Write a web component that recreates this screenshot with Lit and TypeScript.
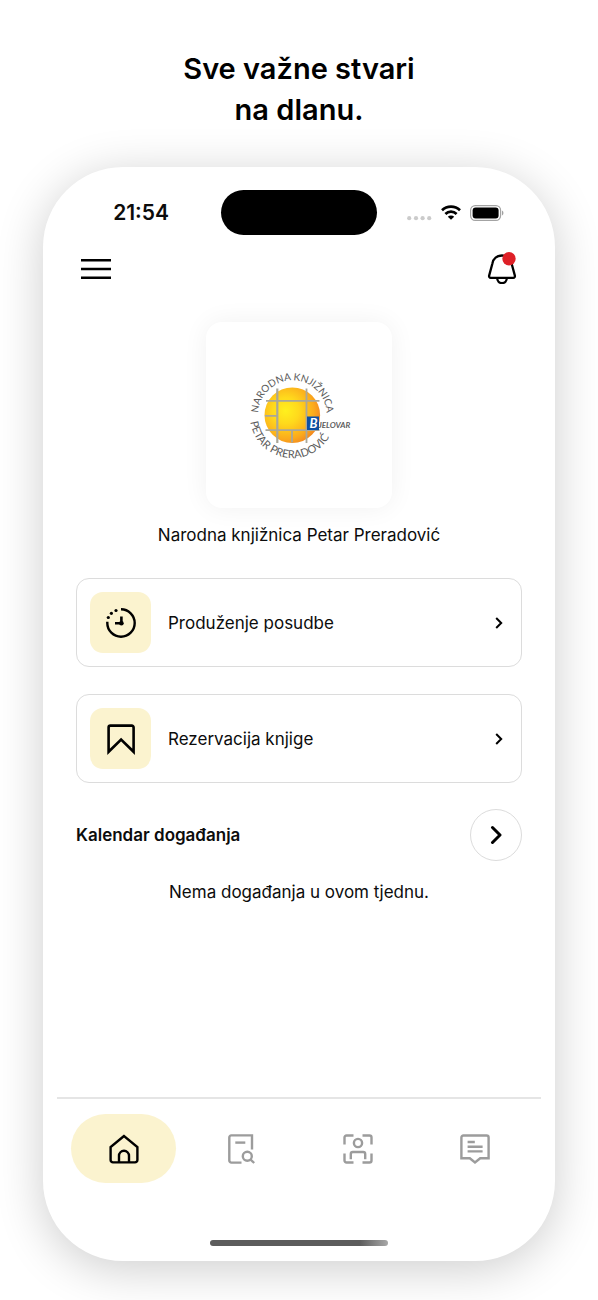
import { LitElement, html, css, svg } from "lit";
import { customElement, property, state } from "lit/decorators.js";
import { classMap } from "lit/directives/class-map.js";

const icons = {
  clock: svg`
    <path d="M16 2.3A13.7 13.7 0 1 1 2.3 16V14.8"></path>
    <path d="M16.4 9.4V16.2H10" stroke-width="2.6"></path>
    <g fill="currentColor" stroke="none">
      <circle cx="16.4" cy="16.3" r="2.3"></circle>
      <circle cx="11" cy="3.5" r="1.6"></circle>
      <circle cx="6.4" cy="6.3" r="1.6"></circle>
      <circle cx="3.3" cy="10.5" r="1.6"></circle>
    </g>`,
  bookmark: svg`<path d="M3.6 28.8V4.4a1.8 1.8 0 0 1 1.8-1.8h21.4a1.8 1.8 0 0 1 1.8 1.8v24.4L16.1 16.6z" stroke-width="2.6"></path>`,
  home: svg`
    <path d="M16 3L2.6 14v13a2.4 2.4 0 0 0 2.4 2.4h22a2.4 2.4 0 0 0 2.4-2.4V14z"></path>
    <path d="M11 29v-6.2a5 5 0 0 1 10 0V29"></path>`,
  search: svg`
    <path d="M16.5 29.6H6.3a2 2 0 0 1-2-2V4.4a2 2 0 0 1 2-2H27v14"></path>
    <path d="M10.3 9.6h10"></path>
    <circle cx="22.3" cy="23.3" r="4.5"></circle>
    <path d="M25.6 26.6l3.6 3.4"></path>`,
  profile: svg`
    <path d="M2.5 11.5V4.5a2 2 0 0 1 2-2h7M20.5 2.5h7a2 2 0 0 1 2 2v7M29.5 20.5v7a2 2 0 0 1-2 2h-7M11.5 29.5h-7a2 2 0 0 1-2-2v-7"></path>
    <circle cx="16" cy="10" r="4.1"></circle>
    <path d="M8.8 26.3V21a2 2 0 0 1 2-2h10.4a2 2 0 0 1 2 2v5.3"></path>`,
  message: svg`
    <path d="M4.4 2.5h23.2a2 2 0 0 1 2 2V25.2H21.2L16 29.4 10.8 25.2H2.4V4.5a2 2 0 0 1 2-2z"></path>
    <path d="M8.6 9h7.2M8.6 13.8h15M8.6 18.4h15"></path>`,
};

type IconName = keyof typeof icons;

const icon = (name: IconName) => html`
  <svg width="32" height="32" viewBox="0 0 32 32" fill="none" stroke="currentColor" stroke-width="2.4" aria-hidden="true">
    ${icons[name]}
  </svg>`;

@customElement("status-bar")
class StatusBar extends LitElement {
  static styles = css`
    :host {
      display: grid;
      grid-template-columns: 1fr 156px 1fr;
      align-items: center;
    }
    .time {
      text-align: right;
      padding-right: 52px;
      font-size: 21px;
      line-height: 24px;
      font-weight: 600;
    }
    .island {
      height: 45px;
      border-radius: 23px;
      background: #000;
    }
    .signals {
      display: flex;
      align-items: center;
      gap: 9px;
      padding-left: 30px;
    }
    svg {
      display: block;
      flex: none;
    }
  `;

  render() {
    return html`
      <span class="time">21:54</span>
      <span class="island"></span>
      <span class="signals">
        <svg width="25" height="16" viewBox="0 0 25 16" fill="#cbcbcb" aria-hidden="true">
          <circle cx="2.2" cy="13.2" r="2.1"></circle>
          <circle cx="9" cy="13.2" r="2.1"></circle>
          <circle cx="15.6" cy="13.2" r="2.1"></circle>
          <circle cx="22.2" cy="13.2" r="2.1"></circle>
        </svg>
        <svg width="20" height="16" viewBox="0 0 20 16" fill="none" stroke="#000" stroke-width="2.7" aria-hidden="true">
          <path d="M1 5.3a13 13 0 0 1 18 0"></path>
          <path d="M4.4 9a8 8 0 0 1 11.2 0"></path>
          <path d="M10 14.8l-3.2-3a4.6 4.6 0 0 1 6.4 0z" fill="#000" stroke="none"></path>
        </svg>
        <svg width="34" height="16" viewBox="0 0 34 16" aria-hidden="true">
          <rect x=".6" y=".6" width="30" height="14.8" rx="4.6" fill="none" stroke="#a3a3a3" stroke-width="1.2"></rect>
          <rect x="2.6" y="2.6" width="26" height="10.8" rx="3" fill="#000"></rect>
          <path d="M32.2 5.4c1.6 1 1.6 4.2 0 5.2z" fill="#8c8c8c"></path>
        </svg>
      </span>
    `;
  }
}

@customElement("library-logo")
class LibraryLogo extends LitElement {
  static styles = css`
    :host {
      display: block;
      width: 186px;
      height: 186px;
      border-radius: 16px;
      background: #fff;
      box-shadow: 0 0 26px rgba(0, 0, 0, 0.06);
    }
    svg {
      display: block;
    }
    .ring {
      font-family: Lato, sans-serif;
      font-size: 10px;
      fill: #5c5c5c;
    }
    .wide {
      font-size: 11px;
    }
    .town {
      font-family: Lato, "Liberation Sans", sans-serif;
      font-weight: 700;
      font-style: italic;
      font-size: 8px;
      fill: #5c5c5c;
    }
    .initial {
      font-size: 13px;
      fill: #fff;
    }
  `;

  render() {
    return html`
      <svg width="186" height="186" viewBox="0 0 186 186" role="img" aria-label="Narodna knjižnica Petar Preradović Bjelovar">
        <defs>
          <radialGradient id="sun" cx="0.38" cy="0.42" r="0.68">
            <stop offset="0" stop-color="#fff01e"></stop>
            <stop offset="0.35" stop-color="#ffd91c"></stop>
            <stop offset="0.75" stop-color="#fbaa1c"></stop>
            <stop offset="1" stop-color="#f07f22"></stop>
          </radialGradient>
          <path id="upper" d="M52.3 92.5A34.2 34.2 0 0 1 120.7 92.5"></path>
          <path id="lower" d="M43.8 93.5A42.7 42.7 0 0 0 129.2 93.5"></path>
        </defs>
        <circle cx="86.3" cy="93.2" r="27.8" fill="url(#sun)"></circle>
        <g stroke="#a9a79a" stroke-width="1.8" fill="none">
          <path d="M71.3 66.5V121" stroke-width="2.2"></path>
          <path d="M100.5 66.5V121"></path>
          <path d="M60 78.8H113.5M59 93.8H71.3M59.5 108.2H113.5M86 108.2V120.5"></path>
        </g>
        <rect x="101" y="94.5" width="12" height="13.5" fill="#0d4fa3"></rect>
        <text class="town initial" x="103.5" y="106">B</text>
        <text class="town" x="112.5" y="106">JELOVAR</text>
        <text class="ring"><textPath href="#upper" startOffset="50%" text-anchor="middle">NARODNA KNJIŽNICA</textPath></text>
        <text class="ring wide"><textPath href="#lower" startOffset="44%" text-anchor="middle">PETAR PRERADOVIĆ</textPath></text>
      </svg>
    `;
  }
}

@customElement("action-card")
class ActionCard extends LitElement {
  @property() icon: IconName = "clock";
  @property() label = "";

  static styles = css`
    :host {
      display: block;
    }
    .card {
      display: flex;
      align-items: center;
      gap: 17px;
      box-sizing: border-box;
      width: 100%;
      padding: 13px 18px 13px 13px;
      border: 1px solid #dcdcdc;
      border-radius: 13px;
      background: #fff;
      color: #0c0c0c;
      font: inherit;
      text-align: left;
      cursor: pointer;
    }
    .tile {
      display: grid;
      place-items: center;
      width: 61px;
      height: 61px;
      border-radius: 13px;
      background: #fbf3cf;
      color: #000;
    }
    .label {
      flex: 1;
    }
    svg {
      display: block;
    }
  `;

  render() {
    return html`
      <button class="card" type="button">
        <span class="tile">${icon(this.icon)}</span>
        <span class="label">${this.label}</span>
        <svg width="8" height="12" viewBox="0 0 8 12" fill="none" stroke="#000" stroke-width="2" aria-hidden="true">
          <path d="M1.2 1l5 5-5 5"></path>
        </svg>
      </button>
    `;
  }
}

@customElement("tab-bar")
class TabBar extends LitElement {
  @state() private active: IconName = "home";

  private tabs: { icon: IconName; label: string }[] = [
    { icon: "home", label: "Početna" },
    { icon: "search", label: "Pretraga" },
    { icon: "profile", label: "Profil" },
    { icon: "message", label: "Poruke" },
  ];

  static styles = css`
    :host {
      display: block;
      margin: 0 14px;
      border-top: 2px solid #e5e5e5;
    }
    .tabs {
      display: grid;
      grid-template-columns: repeat(4, 1fr);
      justify-items: center;
      padding: 15px 7px 0 8px;
    }
    .tab {
      display: grid;
      place-items: center;
      width: 105px;
      height: 69px;
      border-radius: 35px;
      color: #9c9c9c;
    }
    .tab.active {
      background: #fbf3cf;
      color: #000;
    }
    svg {
      display: block;
    }
  `;

  private select(event: Event, name: IconName) {
    event.preventDefault();
    this.active = name;
  }

  render() {
    return html`
      <nav class="tabs">
        ${this.tabs.map(
          (tab) => html`
            <a
              class=${classMap({ tab: true, active: tab.icon === this.active })}
              href="#${tab.icon}"
              aria-label=${tab.label}
              @click=${(event: Event) => this.select(event, tab.icon)}
              >${icon(tab.icon)}</a
            >
          `
        )}
      </nav>
    `;
  }
}

@customElement("app-root")
class AppRoot extends LitElement {
  static styles = css`
    :host {
      display: flex;
      flex-direction: column;
      box-sizing: border-box;
      min-height: 100vh;
      padding: 48px 43px 39px;
      overflow: hidden;
      background: #fff;
      color: #0c0c0c;
      font-family: Inter, "Liberation Sans", sans-serif;
      font-size: 17px;
      line-height: 24px;
    }
    .headline {
      margin: 0 0 37px;
      font-size: 29px;
      line-height: 41px;
      font-weight: 600;
      text-align: center;
      color: #000;
    }
    .phone {
      flex: 1;
      display: flex;
      flex-direction: column;
      padding: 23px 0 15px;
      border-radius: 80px;
      background: #fff;
      box-shadow: 0 8px 48px rgba(0, 0, 0, 0.2);
    }
    .toolbar {
      display: flex;
      justify-content: space-between;
      align-items: center;
      margin: 17px 38px 0;
    }
    .plain {
      display: block;
      padding: 0;
      border: 0;
      background: none;
      cursor: pointer;
    }
    .content {
      display: flex;
      flex-direction: column;
      padding: 38px 33px 24px;
    }
    .logo {
      align-self: center;
    }
    .name {
      margin: 15px 0 31px;
      text-align: center;
    }
    .cards {
      display: grid;
      gap: 27px;
    }
    .calendar {
      display: flex;
      justify-content: space-between;
      align-items: center;
      margin-top: 26px;
    }
    .title {
      margin: 0;
      font-size: 17px;
      line-height: 24px;
      font-weight: 600;
    }
    .more {
      display: grid;
      place-items: center;
      width: 52px;
      height: 52px;
      padding: 0;
      border: 1px solid #dcdcdc;
      border-radius: 50%;
      background: #fff;
      cursor: pointer;
    }
    .empty {
      margin: 19px 0 0;
      text-align: center;
    }
    .tabbar {
      margin-top: auto;
    }
    .indicator {
      align-self: center;
      width: 178px;
      height: 6px;
      margin-top: 57px;
      border-radius: 3px;
      background: linear-gradient(90deg, #5c5c5c 84%, #a8a8a8);
    }
    svg {
      display: block;
    }
  `;

  render() {
    return html`
      <h1 class="headline">Sve važne stvari<br />na dlanu.</h1>
      <main class="phone">
        <status-bar></status-bar>
        <div class="toolbar">
          <button class="plain" type="button" aria-label="Izbornik">
            <svg width="30" height="24" viewBox="0 0 30 24" stroke="#000" stroke-width="2.4">
              <path d="M0 4.3h30M0 13h30M0 21.7h30"></path>
            </svg>
          </button>
          <button class="plain" type="button" aria-label="Obavijesti">
            <svg width="30" height="32" viewBox="0 0 30 32" fill="none" stroke="#000" stroke-width="2.3">
              <path d="M15 3.5c-5 0-8.8 3.2-9.6 8L2.2 23.4c-.4 1.4.3 2.4 1.6 2.4h22.4c1.3 0 2-1 1.6-2.4L24.6 11.5c-.8-4.8-4.6-8-9.6-8z"></path>
              <path d="M10.2 26c0 3 2 5.1 4.8 5.1s4.8-2.1 4.8-5.1"></path>
              <circle cx="22" cy="6.8" r="6.7" fill="#de2027" stroke="none"></circle>
            </svg>
          </button>
        </div>
        <div class="content">
          <library-logo class="logo"></library-logo>
          <p class="name">Narodna knjižnica Petar Preradović</p>
          <div class="cards">
            <action-card icon="clock" label="Produženje posudbe"></action-card>
            <action-card icon="bookmark" label="Rezervacija knjige"></action-card>
          </div>
          <div class="calendar">
            <h2 class="title">Kalendar događanja</h2>
            <button class="more" type="button" aria-label="Otvori kalendar">
              <svg width="12" height="20" viewBox="0 0 12 20" fill="none" stroke="#000" stroke-width="3" stroke-linecap="round" stroke-linejoin="round">
                <path d="M2.5 2.5l7.5 7.5-7.5 7.5"></path>
              </svg>
            </button>
          </div>
          <p class="empty">Nema događanja u ovom tjednu.</p>
        </div>
        <tab-bar class="tabbar"></tab-bar>
        <div class="indicator"></div>
      </main>
    `;
  }
}
